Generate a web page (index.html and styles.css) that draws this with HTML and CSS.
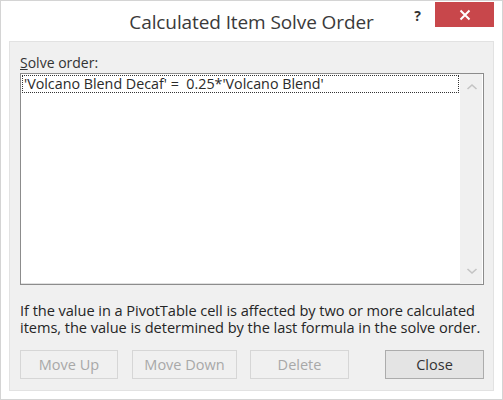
FILE: index.html
```html
<!DOCTYPE html>
<html>
<head>
<meta charset="utf-8">
<link rel="stylesheet" href="styles.css">
</head>
<body>
<div class="window">
  <div class="titlebar">
    <div class="spacer"></div>
    <div class="title">Calculated Item Solve Order</div>
    <div class="controls">
      <span class="help">?</span>
      <span class="close">
        <svg width="12" height="12" viewBox="0 0 12 12"><path d="M1.5 1.5 L10.5 10.5 M10.5 1.5 L1.5 10.5" stroke="#fff" stroke-width="2" fill="none"/></svg>
      </span>
    </div>
  </div>
  <div class="panel">
    <div class="label"><u>S</u>olve order:</div>
    <div class="listbox">
      <div class="items">
        <div class="item">'Volcano Blend Decaf' =&nbsp; 0.25*'Volcano Blend'</div>
      </div>
      <div class="scrollbar">
        <svg width="12" height="8" viewBox="0 0 12 8"><path d="M1.5 6 L6 2 L10.5 6" stroke="#c4c4c4" stroke-width="1.6" fill="none"/></svg>
        <svg width="12" height="8" viewBox="0 0 12 8"><path d="M1.5 2 L6 6 L10.5 2" stroke="#c4c4c4" stroke-width="1.6" fill="none"/></svg>
      </div>
    </div>
    <p class="note">If the value in a PivotTable cell is affected by two or more calculated items, the value is determined by the last formula in the solve order.</p>
    <div class="buttons">
      <button class="btn disabled b-up">Move Up</button>
      <button class="btn disabled b-down">Move Down</button>
      <button class="btn disabled b-del">Delete</button>
      <button class="btn b-close">Close</button>
    </div>
  </div>
</div>
</body>
</html>
```
FILE: styles.css
```css
* { box-sizing: border-box; }
html, body { margin: 0; padding: 0; background: #fff; }
body { font-family: "Open Sans", "Noto Sans", sans-serif; color: #333; }
.window {
  width: 503px; height: 400px;
  background: #fff;
  border: 1px solid #d4d4d4;
  display: flex; flex-direction: column;
}
.titlebar {
  height: 40px;
  display: grid;
  grid-template-columns: 1fr auto 1fr;
  align-items: start;
}
.title {
  font-size: 19px;
  line-height: 24px;
  margin-top: 9px;
  color: #3a3a3a;
  letter-spacing: -0.1px;
}
.controls {
  display: flex; justify-content: flex-end; align-items: flex-start;
  padding-right: 8px;
}
.help {
  font-weight: bold; font-size: 14px; line-height: 16px;
  color: #333; margin-top: 7px; margin-right: 14px;
}
.close {
  width: 59px; height: 25px; margin-top: 1px;
  background: #c8474b;
  display: flex; align-items: center; justify-content: center;
}
.panel {
  flex: 1;
  margin: 0 8px 8px 8px;
  background: #f0f0f0;
  border: 1px solid #e2e2e2;
  padding: 12px 8px 9px 10px;
  display: flex; flex-direction: column;
}
.label { font-size: 14px; line-height: 18px; color: #333; margin-bottom: 1px; }
.listbox {
  height: 212px;
  margin-right: 1px;
  border: 1px solid #8c8c8c;
  box-shadow: inset -1px -1px 0 #e0e0e0;
  background: #fff;
  display: flex;
}
.items { flex: 1; padding: 1px 1px 0 1px; }
.item {
  font-size: 14.3px; line-height: 16px; height: 18px;
  border: 1px dotted #333;
  padding-left: 1px;
  color: #2a2a2a;
  white-space: nowrap;
}
.scrollbar {
  width: 23px;
  background: #f0f0f0;
  border-right: 1px solid #fff;
  display: flex; flex-direction: column; justify-content: space-between; align-items: center;
  padding: 9px 0 9px 1px;
}
.note {
  margin: 17px 0 0 0;
  font-size: 14.6px; line-height: 17px; color: #262626;
  letter-spacing: -0.05px;
}
.buttons { display: flex; margin-top: 14px; }
.btn {
  height: 29px;
  font-family: "Open Sans", "Noto Sans", sans-serif;
  font-size: 14.5px;
  padding: 0;
  border-radius: 0;
}
.disabled { background: #f0f0f0; border: 1px solid #d6d6d6; color: #a8a8a8; }
.b-up { width: 98px; }
.b-down { width: 105px; margin-left: 14px; }
.b-del { width: 99px; margin-left: 13px; }
.b-close { width: 99px; margin-left: 36px; background: #e4e4e4; border: 1px solid #acacac; color: #333; }
```
